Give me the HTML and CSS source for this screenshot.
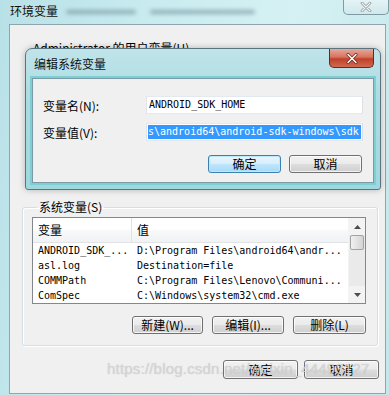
FILE: index.html
```html
<!DOCTYPE html>
<html>
<head>
<meta charset="utf-8">
<link rel="stylesheet" href="styles.css">
</head>
<body>
<div class="screen">
  <div class="titlebar">
    <span class="title">环境变量</span>
    <span class="ghost">
      <span class="ghost-a"></span><span class="ghost-b"></span>
    </span>
    <div class="close-outer">
      <svg width="14" height="10" viewBox="0 0 14 10"><path d="M3 1 L11 9 M11 1 L3 9" stroke="#8c9498" stroke-width="2.6" stroke-linecap="round"/><path d="M3 1 L11 9 M11 1 L3 9" stroke="#f4f7f8" stroke-width="1.2" stroke-linecap="round"/></svg>
    </div>
  </div>

  <div class="window">
    <div class="user-label">Administrator 的用户变量(U)</div>

    <fieldset class="group">
      <legend>系统变量(S)</legend>
      <div class="list">
        <div class="list-main">
          <div class="list-head">
            <span class="c1">变量</span><span class="c2">值</span>
          </div>
          <div class="row"><span class="c1">ANDROID_SDK_...</span><span class="c2">D:\Program Files\android64\andr...</span></div>
          <div class="row"><span class="c1">asl.log</span><span class="c2">Destination=file</span></div>
          <div class="row"><span class="c1">COMMPath</span><span class="c2">C:\Program Files\Lenovo\Communi...</span></div>
          <div class="row"><span class="c1">ComSpec</span><span class="c2">C:\Windows\system32\cmd.exe</span></div>
        </div>
        <div class="scrollbar">
          <div class="sb-btn"><svg width="7" height="4" viewBox="0 0 7 4"><path d="M0 4 L3.5 0 L7 4 Z" fill="#4d4d4d"/></svg></div>
          <div class="sb-thumb"></div>
          <div class="sb-track"></div>
          <div class="sb-btn"><svg width="7" height="4" viewBox="0 0 7 4"><path d="M0 0 L3.5 4 L7 0 Z" fill="#4d4d4d"/></svg></div>
        </div>
      </div>
      <div class="btn-row">
        <button class="btn w71">新建(W)...</button>
        <button class="btn w72">编辑(I)...</button>
        <button class="btn w73">删除(L)</button>
      </div>
    </fieldset>

    <div class="footer">
      <button class="btn w75">确定</button>
      <button class="btn w75">取消</button>
    </div>
  </div>

  <div class="dialog">
    <div class="dlg-titlebar">
      <span class="dlg-title">编辑系统变量</span>
      <div class="close-red">
        <svg width="16" height="11" viewBox="0 0 16 11"><path d="M4 1.5 L12 9.5 M12 1.5 L4 9.5" stroke="#6b2a20" stroke-width="3" stroke-linecap="round"/><path d="M4 1.5 L12 9.5 M12 1.5 L4 9.5" stroke="#ffffff" stroke-width="1.5" stroke-linecap="round"/></svg>
      </div>
    </div>
    <div class="dlg-body">
      <div class="field">
        <span class="label">变量名(N):</span>
        <div class="input">ANDROID_SDK_HOME</div>
      </div>
      <div class="field">
        <span class="label">变量值(V):</span>
        <div class="input selected"><span class="sel">s\android64\android-sdk-windows\sdk</span></div>
      </div>
      <div class="dlg-buttons">
        <button class="btn default w73">确定</button>
        <button class="btn w73">取消</button>
      </div>
    </div>
  </div>

  <div class="watermark">https://blog.csdn.net/weixin_44493127</div>
</div>
</body>
</html>
```

FILE: styles.css
```css
* { box-sizing: border-box; }
html, body { margin: 0; padding: 0; }
body {
  width: 389px;
  height: 395px;
  overflow: hidden;
  font-family: "Noto Sans CJK SC", "Liberation Sans", sans-serif;
  font-size: 12px;
  color: #000;
}
.screen {
  position: relative;
  width: 389px;
  height: 395px;
  overflow: hidden;
  background: linear-gradient(100deg, #b8e1e7 0%, #c9ecf0 35%, #d6f1f3 65%, #c3e7eb 100%);
  display: flex;
  flex-direction: column;
}

/* outer title bar */
.titlebar {
  height: 24px;
  display: flex;
  align-items: flex-start;
  padding-left: 10px;
}
.title {
  margin-top: 3px;
  line-height: 16px;
  font-size: 12px;
  color: #111;
}
.ghost {
  display: flex;
  gap: 14px;
  margin-top: 10px;
  margin-left: 8px;
  filter: blur(2px);
  opacity: 0.55;
}
.ghost-a { width: 70px; height: 4px; background: #5d7a85; border-radius: 2px; }
.ghost-b { width: 105px; height: 4px; background: #5d7a85; border-radius: 2px; }
.close-outer {
  margin-left: auto;
  width: 46px;
  height: 15px;
  border: 1px solid #7e9aa3;
  border-top: none;
  border-radius: 0 0 5px 5px;
  background: linear-gradient(#e4f3f5, #cfe8ec);
  display: flex;
  align-items: center;
  justify-content: center;
}

/* outer window client area */
.window {
  margin-left: 9px;
  width: 377px;
  height: 370px;
  background: #f0f0f0;
  border: 1px solid #8fa6ae;
  display: flex;
  flex-direction: column;
  align-items: flex-start;
}
.user-label {
  margin-top: 16px;
  margin-left: 23px;
  line-height: 14px;
  white-space: nowrap;
}

.group {
  margin: 145px 0 0 12px;
  width: 356px;
  padding: 3px 10px 11px 9px;
  border: 1px solid #d5dfe5;
  border-radius: 3px;
  box-shadow: inset 1px 1px 0 #fff, 1px 1px 0 #fff;
}
.group legend {
  padding: 0 2px;
  margin-left: 5px;
  line-height: 14px;
}

.list {
  width: 334px;
  height: 87px;
  border: 1px solid #828790;
  background: #fff;
  display: flex;
  overflow: hidden;
}
.list-main {
  flex: 1;
  display: flex;
  flex-direction: column;
}
.list-head {
  height: 26px;
  display: flex;
  align-items: center;
  background: linear-gradient(#ffffff 0%, #ffffff 45%, #f7f8fa 55%, #f1f2f4 100%);
  border-bottom: 1px solid #e2e3e5;
  font-size: 12px;
}
.list-head .c1 {
  width: 99px;
  padding-left: 5px;
  height: 100%;
  display: flex;
  align-items: center;
  border-right: 1px solid #e0e3e6;
}
.list-head .c2 { padding-left: 5px; }
.row {
  height: 16px;
  display: flex;
  align-items: center;
  font-family: "DejaVu Sans Mono", "Liberation Mono", monospace;
  font-size: 10px;
  white-space: nowrap;
}
.row .c1 { width: 99px; padding-left: 5px; }
.row .c2 { padding-left: 5px; }

.scrollbar {
  width: 17px;
  display: flex;
  flex-direction: column;
  background: #eaeaea;
  border-left: 1px solid #f4f4f4;
}
.sb-btn {
  height: 17px;
  display: flex;
  align-items: center;
  justify-content: center;
  background: #f3f3f3;
}
.sb-thumb {
  height: 15px;
  margin: 0 1px;
  border: 1px solid #a3a3a3;
  border-radius: 2px;
  background: linear-gradient(90deg, #f1f1f1, #e2e2e2 50%, #d4d4d4);
}
.sb-track { flex: 1; }

.btn-row {
  display: flex;
  justify-content: flex-end;
  gap: 9px;
  margin-top: 12px;
  width: 334px;
}

.btn {
  height: 18px;
  padding: 0;
  font-family: "Noto Sans CJK SC", "Liberation Sans", sans-serif;
  font-size: 12px;
  line-height: 16px;
  color: #000;
  border: 1px solid #707070;
  border-radius: 3px;
  background: linear-gradient(#f2f2f2 0%, #ebebeb 48%, #dddddd 52%, #cfcfcf 100%);
  box-shadow: inset 0 0 0 1px rgba(255,255,255,0.75);
  text-align: center;
}
.w71 { width: 71px; }
.w72 { width: 72px; }
.w73 { width: 73px; }
.w75 { width: 75px; }
.btn.default {
  border-color: #3c7fb1;
  background: linear-gradient(#e9f5fc 0%, #d8eefb 48%, #bee6fd 52%, #a7d9f5 100%);
  box-shadow: inset 0 0 0 1px #bde8fa;
}

.footer {
  display: flex;
  gap: 6px;
  margin-top: 14px;
  margin-left: 213px;
}
.footer .btn { height: 19px; }

/* modal dialog on top */
.dialog {
  position: absolute;
  left: 25px;
  top: 48px;
  width: 356px;
  height: 142px;
  border: 1px solid #5a7580;
  border-radius: 7px 7px 3px 3px;
  background: linear-gradient(180deg, #bfe4ea 0%, #aadbe2 40%, #a0d8df 100%);
  box-shadow: 0 0 6px rgba(0,0,0,0.25);
  display: flex;
  flex-direction: column;
  padding: 0 6px 6px 6px;
}
.dlg-titlebar {
  height: 29px;
  display: flex;
  align-items: flex-start;
  padding-left: 2px;
}
.dlg-title {
  margin-top: 7px;
  line-height: 16px;
  font-size: 12px;
  color: #111;
}
.close-red {
  margin-left: auto;
  width: 45px;
  height: 19px;
  border: 1px solid #5e2b26;
  border-top: none;
  border-radius: 0 0 5px 5px;
  background: linear-gradient(#e6a89b 0%, #d7735e 45%, #c1402a 55%, #cf6a50 100%);
  display: flex;
  align-items: center;
  justify-content: center;
}
.dlg-body {
  flex: 1;
  background: #f0f0f0;
  border: 1px solid #7a9aa5;
  box-shadow: 0 0 0 2px #7fcfd2;
  position: relative;
  padding: 17px 10px 0 10px;
  display: flex;
  flex-direction: column;
}
.field {
  display: flex;
  align-items: center;
  height: 18px;
  margin-bottom: 9px;
}
.label {
  width: 103px;
  white-space: nowrap;
}
.input {
  width: 217px;
  height: 18px;
  border: 1px solid #abadb3;
  border-top-color: #e3e9ef;
  border-left-color: #e2e3ea;
  border-right-color: #dbdfe6;
  border-bottom-color: #e3e9ef;
  background: #fff;
  font-family: "DejaVu Sans Mono", "Liberation Mono", monospace;
  font-size: 10px;
  line-height: 16px;
  padding-left: 2px;
  white-space: nowrap;
  overflow: hidden;
}
.input.selected { padding: 1px; }
.sel {
  display: block;
  background: #3399ff;
  color: #fff;
  line-height: 14px;
  height: 14px;
}
.dlg-buttons {
  display: flex;
  gap: 8px;
  margin-top: 5px;
  margin-left: 165px;
}

.watermark {
  position: absolute;
  left: 107px;
  top: 360px;
  font-family: "Liberation Sans", sans-serif;
  font-size: 15px;
  letter-spacing: 0.2px;
  color: rgba(215, 215, 215, 0.85);
  text-shadow: 0 0 1px rgba(120,120,120,0.35);
  white-space: nowrap;
}
```
